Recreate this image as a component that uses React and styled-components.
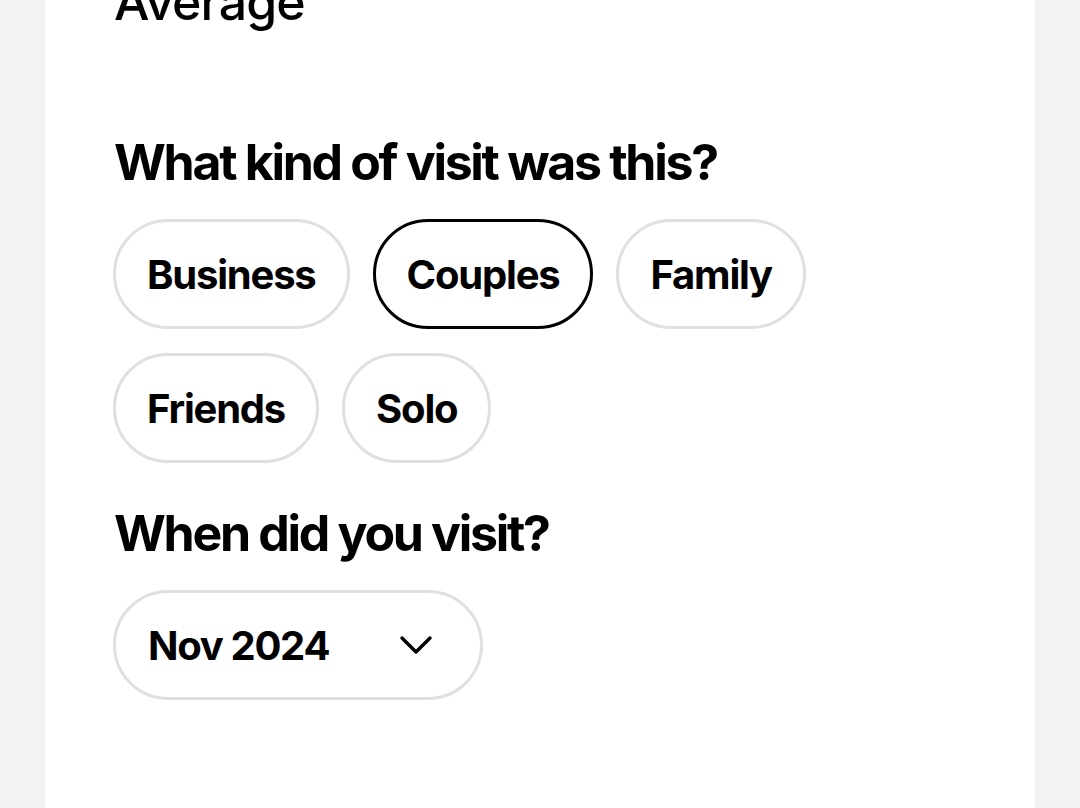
import React, { useState } from "react";
import styled, { createGlobalStyle } from "styled-components";

const Global = createGlobalStyle`
  html, body { margin: 0; padding: 0; background: #f2f2f2; }
  body { font-family: Inter, "Noto Sans", Arial, sans-serif; color: #000; }
  * { box-sizing: border-box; }
`;

const Page = styled.div`
  width: 1080px;
  height: 808px;
  overflow: hidden;
  background: #f2f2f2;
  padding-left: 45px;
`;

const Panel = styled.div`
  width: 990px;
  height: 808px;
  background: #fff;
  padding: 0 68px;
  display: flex;
  flex-direction: column;
  align-items: flex-start;
`;

const Caption = styled.div`
  font-size: 50px;
  line-height: 56px;
  font-weight: 500;
  letter-spacing: -0.9px;
  margin-top: -26px;
  padding-left: 1px;
`;

const Heading = styled.h2`
  margin: ${(p) => p.$mt}px 0 0;
  padding-left: 1px;
  font-size: 50px;
  line-height: 56px;
  font-weight: 700;
  letter-spacing: -2.3px;
`;

const Chips = styled.div`
  display: flex;
  flex-wrap: wrap;
  gap: 24px 23px;
  margin-top: 29px;
`;

const Chip = styled.button`
  height: 110px;
  padding: 0 31px;
  border-radius: 55px;
  border: 3px solid ${(p) => (p.$active ? "#000" : "#e0e0e0")};
  border-width: ${(p) => (p.$active ? "3.5px" : "3px")};
  background: #fff;
  font-family: inherit;
  font-size: 40px;
  font-weight: 700;
  letter-spacing: -1.2px;
  color: #000;
  display: flex;
  align-items: center;
  cursor: pointer;
`;

const Select = styled.button`
  margin-top: 29px;
  width: 370px;
  height: 110px;
  padding: 0 47px 0 32px;
  border-radius: 55px;
  border: 3px solid #e0e0e0;
  background: #fff;
  font-family: inherit;
  font-size: 40px;
  font-weight: 700;
  letter-spacing: -1.3px;
  color: #000;
  display: flex;
  align-items: center;
  justify-content: space-between;
`;

const Chevron = () => (
  <svg width="34" height="22" viewBox="0 0 34 22" fill="none">
    <path d="M3 4 L17 18 L31 4" stroke="#000" strokeWidth="3.4" strokeLinecap="round" strokeLinejoin="round" />
  </svg>
);

export default function App() {
  const [kind, setKind] = useState("Couples");
  const kinds = ["Business", "Couples", "Family", "Friends", "Solo"];
  return (
    <Page>
      <Global />
      <Panel>
        <Caption>Average</Caption>
        <Heading $mt={104}>What kind of visit was this?</Heading>
        <Chips>
          {kinds.map((k) => (
            <Chip key={k} $active={kind === k} onClick={() => setKind(k)}>
              {k}
            </Chip>
          ))}
        </Chips>
        <Heading $mt={42}>When did you visit?</Heading>
        <Select>
          Nov 2024
          <Chevron />
        </Select>
      </Panel>
    </Page>
  );
}
